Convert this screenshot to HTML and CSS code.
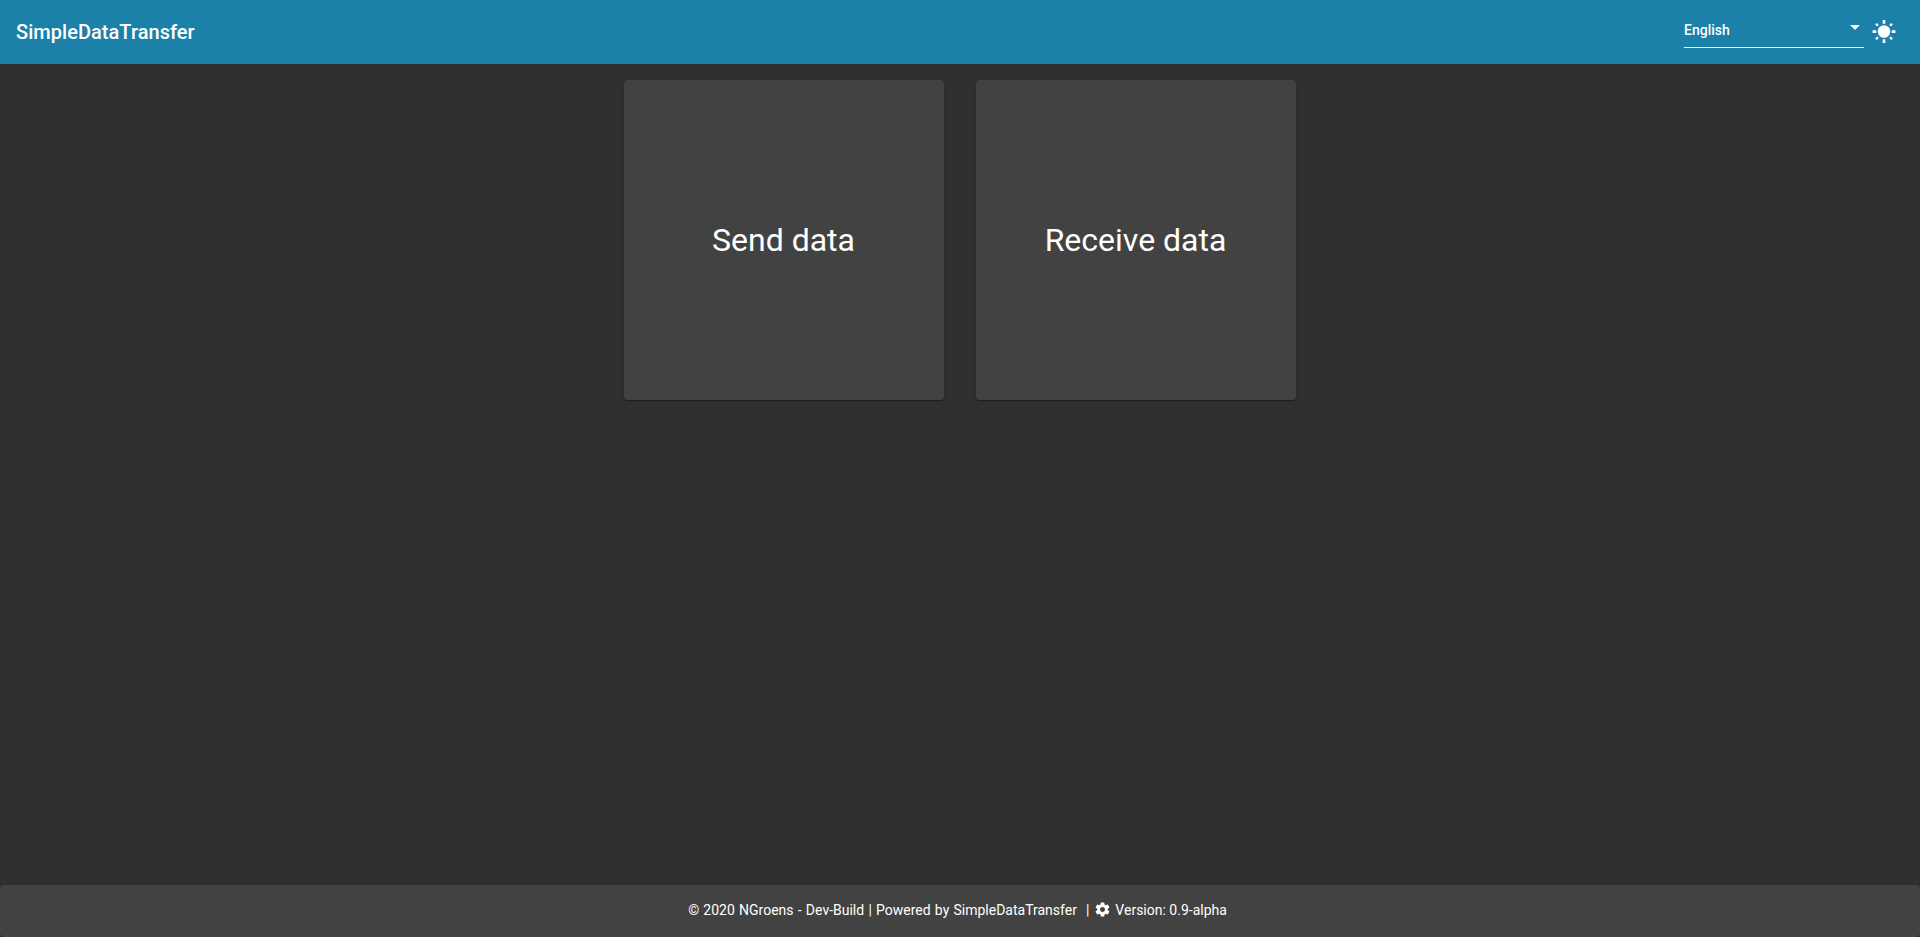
FILE: index.html
```html
<!DOCTYPE html>
<html lang="en">
<head>
<meta charset="utf-8">
<title>SimpleDataTransfer</title>
<link rel="stylesheet" href="styles.css">
</head>
<body>
<header class="toolbar">
  <span class="brand">SimpleDataTransfer</span>
  <div class="language"><span>English</span><i class="arrow"></i></div>
  <button class="theme" aria-label="Toggle theme">
    <svg viewBox="0 0 24 24"><circle cx="12" cy="11.5" r="6.3"/><path d="M10.700 0h2.600v3.800h-2.600zM10.700 19.200h2.600V23h-2.600zM.6 10.200h3.600V13H.6zM19.800 10.200h3.600V13h-3.600zM3.200 4.400l1.500-1.500L6.800 5 5.300 6.500zM20.800 4.400l-1.500-1.500L17.200 5l1.500 1.500zM3.200 18.600l1.500 1.500L6.800 18l-1.500-1.500zM20.800 18.600l-1.500 1.500-2.100-2.100 1.500-1.500z"/></svg>
  </button>
</header>
<main class="cards">
  <a class="card">Send data</a>
  <a class="card">Receive data</a>
</main>
<footer class="footer">
  <span class="credits">© 2020 NGroens - Dev-Build | Powered by SimpleDataTransfer</span>
  <span class="divider">|</span>
  <svg class="gear" viewBox="0 0 24 24"><path d="M19.43 12.98c.04-.32.07-.64.07-.98s-.03-.66-.07-.98l2.11-1.65c.19-.15.24-.42.12-.64l-2-3.46c-.12-.22-.39-.3-.61-.22l-2.49 1c-.52-.4-1.08-.73-1.69-.98l-.38-2.65C14.46 2.18 14.25 2 14 2h-4c-.25 0-.46.18-.49.42l-.38 2.65c-.61.25-1.17.59-1.69.98l-2.49-1c-.23-.09-.49 0-.61.22l-2 3.46c-.13.22-.07.49.12.64l2.11 1.65c-.04.32-.07.65-.07.98s.03.66.07.98l-2.11 1.65c-.19.15-.24.42-.12.64l2 3.46c.12.22.39.3.61.22l2.49-1c.52.4 1.08.73 1.69.98l.38 2.65c.03.24.24.42.49.42h4c.25 0 .46-.18.49-.42l.38-2.65c.61-.25 1.17-.59 1.69-.98l2.49 1c.23.09.49 0 .61-.22l2-3.46c.12-.22.07-.49-.12-.64l-2.11-1.65zM12 15.5c-1.93 0-3.5-1.57-3.5-3.5s1.57-3.5 3.5-3.5 3.5 1.57 3.5 3.5-1.57 3.5-3.5 3.5z"/></svg>
  <span>Version: 0.9-alpha</span>
</footer>
</body>
</html>
```
FILE: styles.css
```css
* { box-sizing: border-box; }
body {
  margin: 0;
  height: 100vh;
  display: flex;
  flex-direction: column;
  background: #303030;
  color: #fff;
  font-family: Roboto, "Liberation Sans", sans-serif;
}
.toolbar {
  height: 64px;
  padding: 0 24px 0 16px;
  display: flex;
  align-items: center;
  background: #1b81a8;
}
.brand { flex: 1; font-size: 20px; font-weight: 500; letter-spacing: .04px; }
.language {
  width: 180px;
  height: 32px;
  padding: 5px 4px 0 0;
  margin: 0 8px 0 0;
  display: flex;
  justify-content: space-between;
  border-bottom: 1px solid #fff;
  font-size: 14px;
  font-weight: 500;
  line-height: 18px;
}
.arrow {
  margin-top: 4px;
  height: 5px;
  border: 5px solid transparent;
  border-top-color: #fff;
  border-bottom: 0;
}
.theme { width: 24px; height: 24px; padding: 0; border: 0; background: none; }
.theme svg { display: block; fill: #fff; }
.cards { flex: 1; display: flex; justify-content: center; gap: 32px; padding-top: 16px; }
.card {
  width: 320px;
  height: 320px;
  padding-right: 1px;
  display: flex;
  align-items: center;
  justify-content: center;
  border-radius: 4px;
  background: #424242;
  box-shadow: 0 2px 1px -1px rgba(0,0,0,.2), 0 1px 1px rgba(0,0,0,.14), 0 1px 3px rgba(0,0,0,.12);
  font-size: 32px;
}
.footer {
  height: 52px;
  padding: 0 5px 2px 0;
  display: flex;
  align-items: center;
  justify-content: center;
  border-radius: 4px;
  background: #424242;
  box-shadow: 0 2px 1px -1px rgba(0,0,0,.2), 0 1px 1px rgba(0,0,0,.14), 0 1px 3px rgba(0,0,0,.12);
  font-size: 14px;
}
.credits { word-spacing: .75px; }
.divider { margin: 0 5px 0 9px; }
.gear { width: 17px; height: 17px; margin: 0 4px 2px 0; fill: #fff; }
```
